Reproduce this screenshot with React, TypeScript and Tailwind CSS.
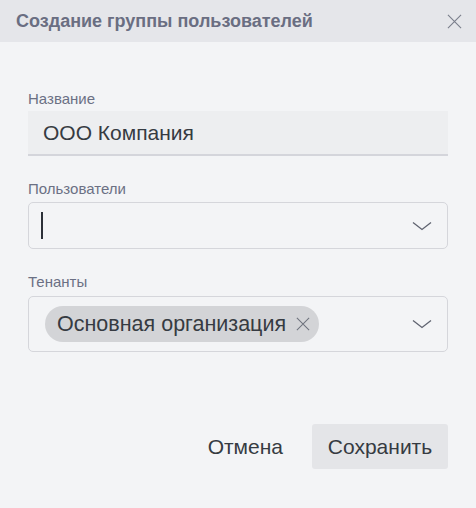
import React from "react";

const Chevron = () => (
  <svg width="20" height="10" viewBox="0 0 20 10" fill="none" stroke="#5f6370" strokeWidth="1.3">
    <path d="M1 1.5 L10 8.5 L19 1.5" />
  </svg>
);

const Cross = ({ size, color }: { size: number; color: string }) => (
  <svg width={size} height={size} viewBox="0 0 16 16" fill="none" stroke={color} strokeWidth="1.2">
    <path d="M1 1 L15 15 M15 1 L1 15" />
  </svg>
);

export default function App() {
  return (
    <div
      className="w-[476px] h-[508px] bg-[#f3f4f6] flex flex-col"
      style={{ fontFamily: '"Liberation Sans", Arial, sans-serif' }}
    >
      <div className="h-[42px] bg-[#e5e6ea] flex items-center justify-between pl-[16px] pr-[14px] shrink-0">
        <span className="text-[18px] font-bold text-[#6a6e82]">Создание группы пользователей</span>
        <Cross size={15} color="#7b7f8c" />
      </div>
      <div className="flex flex-col px-[28px] pt-[48px]">
        <label className="text-[15px] leading-[18px] text-[#6b7084] mb-[3px]">Название</label>
        <div className="h-[45px] bg-[#edeef0] border-b-2 border-[#d4d5db] flex items-center pl-[15px] text-[21px] text-[#363b42]">
          ООО Компания
        </div>
        <label className="text-[15px] leading-[18px] text-[#6b7084] mt-[24px] mb-[4px]">Пользователи</label>
        <div className="h-[47px] rounded-[5px] border border-[#d5d6db] flex items-center justify-between pl-[12px] pr-[15px]">
          <div className="w-[2px] h-[27px] bg-[#2c3038]" />
          <Chevron />
        </div>
        <label className="text-[15px] leading-[18px] text-[#6b7084] mt-[24px] mb-[5px]">Тенанты</label>
        <div className="h-[56px] rounded-[5px] border border-[#d5d6db] flex items-center justify-between pl-[16px] pr-[15px]">
          <div className="h-[36px] rounded-full bg-[#d3d4d7] flex items-center pl-[12px] pr-[9px] gap-[10px]">
            <span className="text-[21.5px] text-[#363b42]">Основная организация</span>
            <Cross size={14} color="#6f737e" />
          </div>
          <Chevron />
        </div>
        <div className="flex justify-end items-center mt-[72px] gap-[29px]">
          <span className="text-[21px] text-[#363b42]">Отмена</span>
          <div className="h-[45px] w-[136px] rounded-[3px] bg-[#e4e5e8] flex items-center justify-center text-[21px] text-[#363b42]">
            Сохранить
          </div>
        </div>
      </div>
    </div>
  );
}
